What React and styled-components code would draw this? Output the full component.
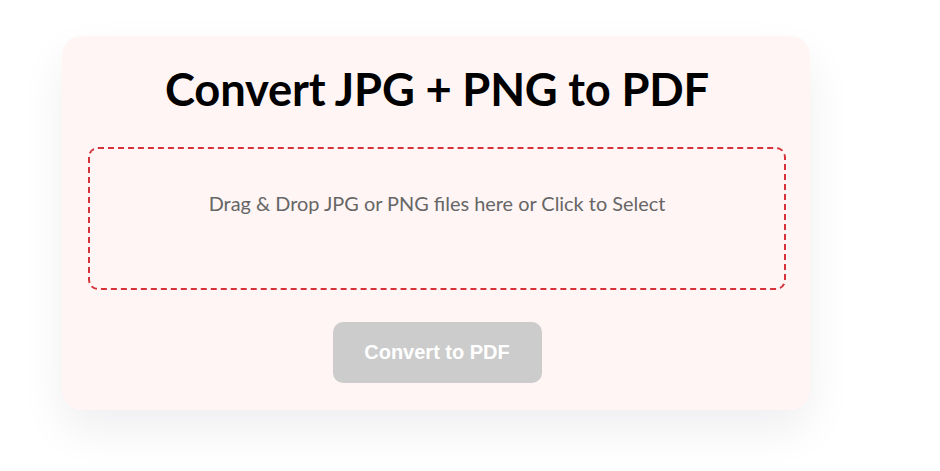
import React from "react";
import styled, { createGlobalStyle } from "styled-components";

const Global = createGlobalStyle`
  html, body { margin: 0; padding: 0; background: #ffffff; }
  body { font-family: "Lato", "Noto Sans", sans-serif; min-height: 471px; }
`;

const Page = styled.div`
  padding: 36px 0 60px 62px;
`;

const Card = styled.div`
  box-sizing: border-box;
  width: 748px;
  height: 374px;
  background: #fff5f5;
  border-radius: 20px;
  box-shadow: 0 20px 45px rgba(10, 10, 40, 0.065);
  padding: 25px 24px 26px 26px;
  display: flex;
  flex-direction: column;
  align-items: stretch;
`;

const Title = styled.h1`
  margin: 0;
  font-family: "Lato", sans-serif;
  font-weight: 700;
  font-size: 45.3px;
  line-height: 56px;
  color: #000;
  text-align: center;
  letter-spacing: -0.2px;
`;

const DropZone = styled.div`
  box-sizing: border-box;
  margin-top: 30px;
  height: 143px;
  border: 2px dashed #d6323a;
  border-radius: 10px;
  padding-top: 41px;
  text-align: center;
  color: #666;
  font-size: 19.9px;
  line-height: 26px;
  cursor: pointer;
`;

const Actions = styled.div`
  display: flex;
  justify-content: center;
  margin-top: 32px;
`;

const Button = styled.button`
  box-sizing: border-box;
  width: 209px;
  height: 61px;
  border: none;
  border-radius: 10px;
  background: #cccccc;
  color: #fff;
  font-family: "Liberation Sans", Arial, sans-serif;
  font-weight: 700;
  font-size: 20px;
  cursor: not-allowed;
`;

export default function App() {
  return (
    <>
      <Global />
      <Page>
        <Card>
          <Title>Convert JPG + PNG to PDF</Title>
          <DropZone>Drag &amp; Drop JPG or PNG files here or Click to Select</DropZone>
          <Actions>
            <Button disabled>Convert to PDF</Button>
          </Actions>
        </Card>
      </Page>
    </>
  );
}
